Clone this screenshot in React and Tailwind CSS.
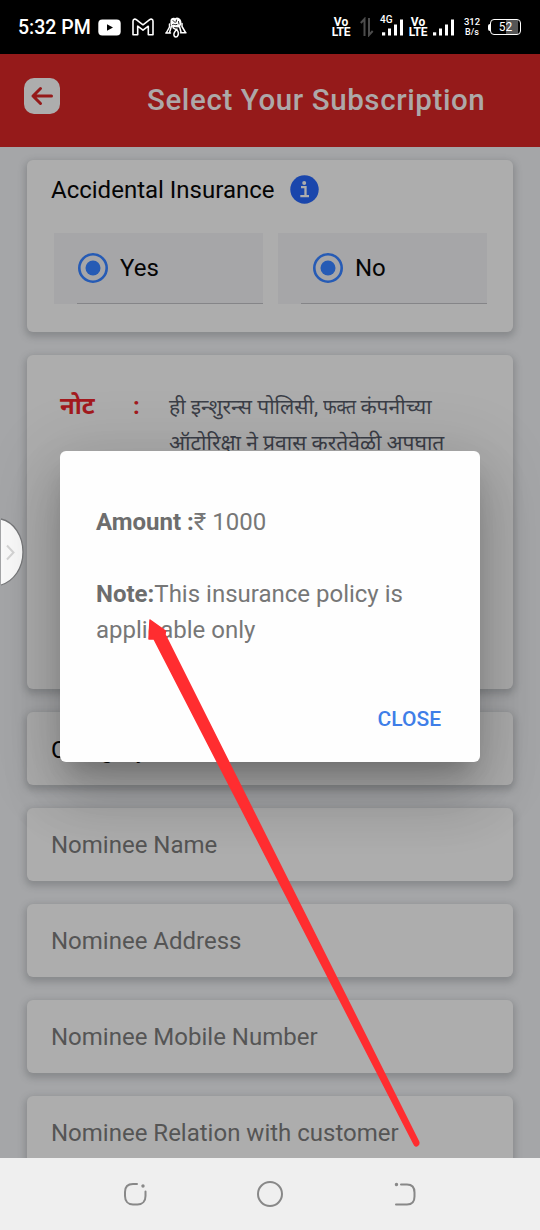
import React from "react";

const card =
  "mx-auto w-[486px] shrink-0 rounded-[6px] bg-[#adadad] shadow-[0_3px_7px_2px_rgba(60,64,68,0.28)]";

function Volte() {
  return (
    <div className="flex w-5 flex-col items-center text-[12px] font-bold leading-[10.5px] text-white">
      <span>Vo</span>
      <span className="tracking-[-0.2px]">LTE</span>
    </div>
  );
}

function Signal() {
  return (
    <svg width="22" height="18" viewBox="0 0 22 18" fill="#fff">
      <rect x="0" y="13.3" width="3.2" height="3.2" />
      <rect x="6" y="9.5" width="3" height="7" />
      <rect x="12" y="5.5" width="3" height="11" />
      <rect x="18" y="0.5" width="3" height="16" />
    </svg>
  );
}

function StatusBar() {
  return (
    <div className="flex h-[54px] shrink-0 items-center bg-black pl-[18px] text-white">
      <span className="w-[80px] whitespace-nowrap pt-[2px] text-[19.5px] font-medium">5:32 PM</span>
      <svg width="23" height="17" viewBox="0 0 23 17">
        <rect x="0.3" y="0.5" width="22.4" height="16" rx="4" fill="#fff" />
        <path d="M9 5.3 15 8.5 9 11.7Z" fill="#000" />
      </svg>
      <svg className="ml-[11px]" width="22" height="18" viewBox="0 0 22 18" fill="none" stroke="#fff" strokeWidth="1.6" strokeLinejoin="round">
        <path d="M1 16.7V3.2C1 1.2 3 .7 4.3 1.7L11 6.8 17.7 1.7C19 .7 21 1.2 21 3.2V16.7H16.3V8.2L11 12.2 5.7 8.2V16.7Z" />
      </svg>
      <svg className="ml-[11px]" width="22" height="21" viewBox="0 0 22 21" fill="none" stroke="#fff" strokeLinecap="round" strokeLinejoin="round">
        <path d="M5.500 4.500C5 1.500 8 0 10 1.200 12-.5 15.500 1 16.200 4 17 7 15.500 9.500 13.500 10.500L7.500 10C5.500 8.500 5.200 6.500 5.500 4.500Z" fill="#fff" stroke="none" />
        <path d="M8 3.500 10 5.500M11.500 3 11 5M7.500 7.500C9 6.500 10 8.500 12 7.500M13.500 4.500 14 7" stroke="#000" strokeWidth="0.9" />
        <path d="M4.500 7V10L1.500 15.500M0.800 16H5.500M6.500 9 4.500 15.500" strokeWidth="1.500" />
        <path d="M17 6.500V9.500L20.500 15.500M15.500 15.700H21M14.500 9.500 16 15" strokeWidth="1.500" />
        <path d="M8 10.500C9.500 12.500 12 12 13 14.500 14 17.500 12.500 20 11 20S8.500 18.500 9 16.500 10.500 14 12 12" strokeWidth="1.500" />
      </svg>
      <div className="ml-[144px] flex items-center">
        <Volte />
        <svg className="ml-[9px]" width="14" height="20" viewBox="0 0 14 20" fill="none" stroke="#4c4c4c" strokeWidth="2">
          <path d="M4.5 19V2L.8 6M9 1V18L12.7 14" />
        </svg>
        <div className="relative ml-[8px] flex h-[20px] items-end">
          <span className="absolute -left-[2px] top-[-3px] text-[10px] font-medium leading-[12px]">4G</span>
          <Signal />
        </div>
        <div className="ml-[4px]"><Volte /></div>
        <div className="ml-[5px] flex h-[20px] items-end"><Signal /></div>
        <div className="ml-[8px] flex w-[18px] flex-col items-center text-[9.5px] font-medium leading-[11.5px]">
          <span>312</span>
          <span className="text-[9px]">B/s</span>
        </div>
        <div className="ml-[7px] flex items-center">
          <span className="h-[7px] w-[2px] rounded-l bg-white" />
          <span className="flex h-[16px] w-[31px] items-center justify-center rounded-[4px] border-[1.5px] border-white bg-[linear-gradient(90deg,#000_50%,#555_50%,#555_94%,#000_94%)] text-[12px] leading-none">
            52
          </span>
        </div>
      </div>
    </div>
  );
}

function Radio({ label, inner }) {
  return (
    <div className="flex h-[71px] w-[209px] flex-col bg-[#a6a6a8]">
      <div className={"flex flex-1 items-center " + inner}>
        <svg width="30" height="30" viewBox="0 0 30 30">
          <circle cx="15" cy="15" r="13.7" fill="none" stroke="#265bb5" strokeWidth="2.6" />
          <circle cx="15" cy="15" r="7.5" fill="#265bb5" />
        </svg>
        <span className="ml-3 text-[24px] leading-none text-[#050505]">{label}</span>
      </div>
      <div className="ml-[23px] h-px bg-[#858588]" />
    </div>
  );
}

function Field({ label }) {
  return (
    <div className={card + " flex h-[73px] items-center pl-[24px] text-[24px] text-[#555]"}>
      {label}
    </div>
  );
}

export default function App() {
  return (
    <div className="relative flex h-[1230px] w-[540px] flex-col overflow-hidden bg-[#a5a6a8] font-['Roboto','Noto_Sans',sans-serif]">
      <StatusBar />
      <header className="flex h-[93px] shrink-0 bg-[#951a1a] pl-6">
        <div className="mt-6 flex h-9 w-9 items-center justify-center rounded-[10px] bg-[#adadad]">
          <svg width="24" height="20" viewBox="0 0 24 20" fill="none" stroke="#951a1a" strokeWidth="3" strokeLinecap="round" strokeLinejoin="round">
            <path d="M21.500 10H3M10.500 2.500 3 10l7.500 7.500" />
          </svg>
        </div>
        <h1 className="ml-[87px] mt-[28px] whitespace-nowrap text-[29.5px] font-medium leading-[36px] tracking-[0.6px] text-[#ada8a8]">
          Select Your Subscription
        </h1>
      </header>

      <main className="flex h-[1011px] shrink-0 flex-col gap-[23px] overflow-hidden pt-[13px]">
        <section className={card + " h-[172px]"}>
          <div className="flex items-center pl-[24px] pt-[15px]">
            <span className="whitespace-nowrap text-[24px] leading-[28px] text-[#050505]">Accidental Insurance</span>
            <svg className="ml-[15px]" width="29" height="29" viewBox="0 0 29 29">
              <circle cx="14.5" cy="14.5" r="14.2" fill="#1a46ac" />
              <circle cx="14.2" cy="8" r="2" fill="#adadad" />
              <path d="M11 12.2H15.5V21M10.3 21.2H19" fill="none" stroke="#adadad" strokeWidth="2.3" />
            </svg>
          </div>
          <div className="mt-[29px] flex gap-[15px] pl-[27px]">
            <Radio label="Yes" inner="pl-[24px]" />
            <Radio label="No" inner="pl-[35px]" />
          </div>
        </section>

        <section className={card + " flex h-[334px] pl-[33px] pt-[33px]"}>
          <div className="w-[73px] text-[24px] font-bold leading-[36px] text-[#a31a1e]">नोट</div>
          <div className="w-[36px] text-[24px] font-bold leading-[36px] text-[#a31a1e]">:</div>
          <p className="mt-px whitespace-nowrap text-[21px] leading-[36px] text-[#3b3e47]">
            ही इन्शुरन्स पोलिसी,{" "}
            <span className="inline-block w-[32px] origin-left scale-x-[0.84]">फक्त</span> कंपनीच्या
            <br />
            ऑटोरिक्षा ने प्रवास करतेवेळी अपघात
          </p>
        </section>

        <div className={card + " flex h-[73px] items-center pl-[24px] pt-[2px] text-[24px] text-[#050505]"}>Category</div>
        <Field label="Nominee Name" />
        <Field label="Nominee Address" />
        <Field label="Nominee Mobile Number" />
        <Field label="Nominee Relation with customer" />
      </main>

      <nav className="flex h-[72px] shrink-0 items-center justify-center gap-[109px] bg-[#efefef]">
        <svg width="26" height="26" viewBox="0 0 26 26" fill="none" stroke="#888" strokeWidth="2" strokeLinecap="round">
          <path d="M15 3H11C5 3 3 6 3 11v4c0 5 3 8.500 8 8.500h4.500c5 0 8-3.500 8-8.500v-4.500" />
          <circle cx="21" cy="5" r="1" fill="#888" strokeWidth="1.400" />
        </svg>
        <svg width="26" height="26" viewBox="0 0 26 26" fill="none" stroke="#888" strokeWidth="2">
          <circle cx="13" cy="13" r="12" />
        </svg>
        <svg width="26" height="26" viewBox="0 0 26 26" fill="none" stroke="#888" strokeWidth="2" strokeLinecap="round">
          <path d="M9 3.500h6c5 0 7.500 3 7.500 8v4c0 5-2.500 8-7.500 8H4" />
          <circle cx="4.500" cy="3.500" r="1" fill="#888" strokeWidth="1.400" />
        </svg>
      </nav>

      {/* Side panel handle */}
      <svg className="absolute left-0 top-[516px]" width="26" height="72" viewBox="0 0 26 72">
        <path d="M1 3C14 6 23 20 23 36S14 65 1 69Z" fill="#fafafa" />
        <path d="M1 3C14 6 23 20 23 36S14 65 1 69" fill="none" stroke="#77787a" strokeWidth="1.300" />
        <path d="M7 29.500 13.500 36.500 7 43.500" fill="none" stroke="#d5d5d5" strokeWidth="2" />
      </svg>

      {/* Dialog */}
      <div
        role="dialog"
        className="absolute left-[60px] top-[451px] flex h-[310.5px] w-[420px] flex-col rounded-[6px] bg-[#fefefe] px-[36px] pt-[52.5px] text-[24px] leading-[36px] text-[#777] shadow-[0_16px_22px_-10px_rgba(0,0,0,0.2),0_36px_57px_4px_rgba(0,0,0,0.14),0_13px_69px_12px_rgba(0,0,0,0.12)]"
      >
        <p className="whitespace-nowrap"><b className="text-[#6d6d6d]">Amount :</b>₹ 1000</p>
        <p className="mt-[36px] whitespace-nowrap">
          <b className="text-[#6d6d6d]">Note:</b>This insurance policy is
          <br />
          applicable only
        </p>
        <button className="mr-[3px] mt-[53.5px] self-end text-[21px] font-medium leading-[36px] text-[#3f7ee8]">CLOSE</button>
      </div>

      {/* Pointer arrow */}
      <svg className="absolute left-0 top-0" width="540" height="1230" viewBox="0 0 540 1230">
        <path
          d="M150 620 165.500 631 165 634.500 418.500 1141.500Q419.500 1144 417.500 1145.500T414 1144L154 639 149 639Z"
          fill="#ff2d30"
          stroke="#ff2d30"
          strokeWidth="1.500"
          strokeLinejoin="round"
        />
      </svg>
    </div>
  );
}
